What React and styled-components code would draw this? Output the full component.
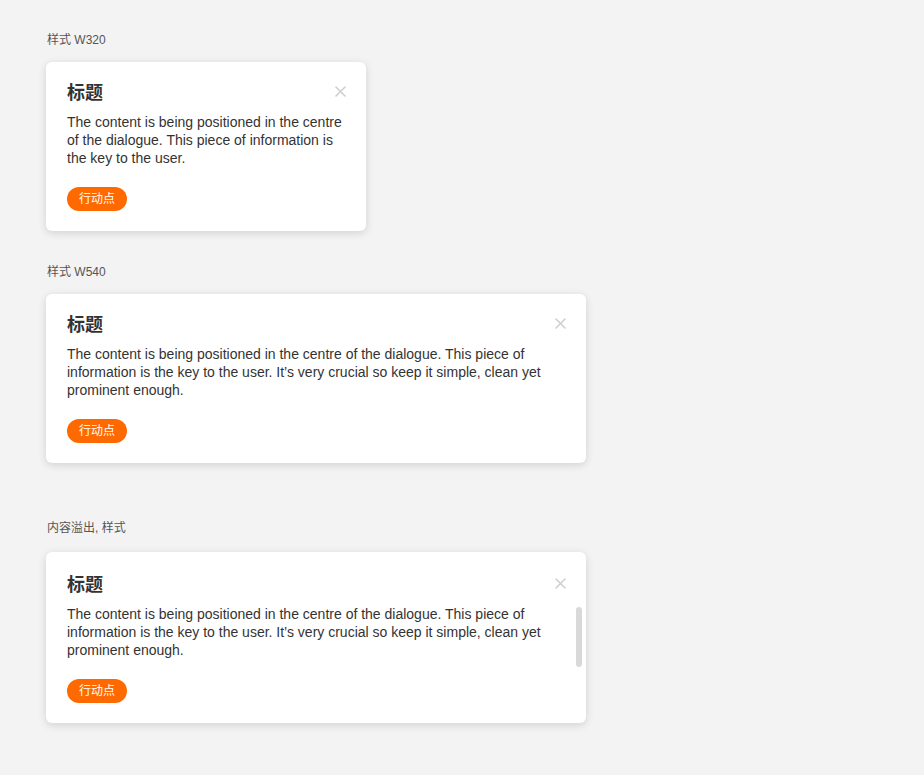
import React from 'react';
import styled, { createGlobalStyle } from 'styled-components';

const GlobalStyle = createGlobalStyle`
  html, body {
    margin: 0;
    padding: 0;
    background: #f3f3f3;
  }
  body {
    font-family: "Liberation Sans", "Noto Sans CJK SC", Arial, sans-serif;
    color: #333;
  }
`;

const Page = styled.div`
  min-height: 775px;
  padding: 32px 0 0 46px;
  box-sizing: border-box;
`;

const Section = styled.section`
  display: flex;
  flex-direction: column;
  align-items: flex-start;
  margin-top: ${p => p.$gap || 0}px;
`;

const Label = styled.div`
  font-size: 12px;
  line-height: 16px;
  color: #555;
  margin-left: 1px;
  margin-bottom: ${p => p.$space || 14}px;
`;

const Card = styled.div`
  position: relative;
  width: ${p => p.$width}px;
  box-sizing: border-box;
  background: #fff;
  border-radius: 6px;
  box-shadow: 0 2px 8px rgba(0, 0, 0, 0.14);
  padding: ${p => p.$top || 19}px 21px 20px 21px;
`;

const Header = styled.div`
  display: flex;
  align-items: center;
  justify-content: space-between;
  height: 24px;
`;

const Title = styled.h3`
  margin: 0;
  font-size: 18px;
  line-height: 24px;
  font-weight: 700;
  color: #333;
`;

const Close = styled.button`
  border: 0;
  background: none;
  padding: 0;
  margin-right: -2px;
  margin-top: -4px;
  width: 14px;
  height: 14px;
  display: flex;
  align-items: center;
  justify-content: center;
  cursor: pointer;
`;

const Body = styled.div`
  position: relative;
  margin-top: 8px;
  padding-right: ${p => (p.$scroll ? 20 : 0)}px;
`;

const Text = styled.p`
  margin: 0;
  font-size: 14px;
  line-height: 18px;
  color: #333;
`;

const Thumb = styled.div`
  position: absolute;
  right: -17px;
  top: 2px;
  width: 6px;
  height: 60px;
  border-radius: 3px;
  background: #d9d9d9;
`;

const Action = styled.button`
  margin-top: 20px;
  height: 24px;
  padding: 0 12px;
  border: 0;
  border-radius: 12px;
  background: #ff6a00;
  color: #fff;
  font-family: "Liberation Sans", "Noto Sans CJK SC", sans-serif;
  font-size: 12px;
  line-height: 24px;
  cursor: pointer;
`;

const CloseIcon = () => (
  <svg width="11" height="11" viewBox="0 0 11 11">
    <path d="M1 1L10 10M10 1L1 10" stroke="#cfcfcf" strokeWidth="1.6" strokeLinecap="round" />
  </svg>
);

const short = 'The content is being positioned in the centre of the dialogue. This piece of information is the key to the user.';
const long = 'The content is being positioned in the centre of the dialogue. This piece of information is the key to the user. It’s very crucial so keep it simple, clean yet prominent enough.';

const Dialog = ({ width, text, scroll, top }) => (
  <Card $width={width} $top={top}>
    <Header>
      <Title>标题</Title>
      <Close aria-label="close"><CloseIcon /></Close>
    </Header>
    <Body $scroll={scroll}>
      <Text>{text}</Text>
      {scroll && <Thumb />}
    </Body>
    <Action>行动点</Action>
  </Card>
);

export default function App() {
  return (
    <Page>
      <GlobalStyle />
      <Section>
        <Label>样式 W320</Label>
        <Dialog width={320} text={short} />
      </Section>
      <Section $gap={33}>
        <Label>样式 W540</Label>
        <Dialog width={540} text={long} />
      </Section>
      <Section $gap={57}>
        <Label $space={16}>内容溢出, 样式</Label>
        <Dialog width={540} text={long} scroll top={21} />
      </Section>
    </Page>
  );
}
